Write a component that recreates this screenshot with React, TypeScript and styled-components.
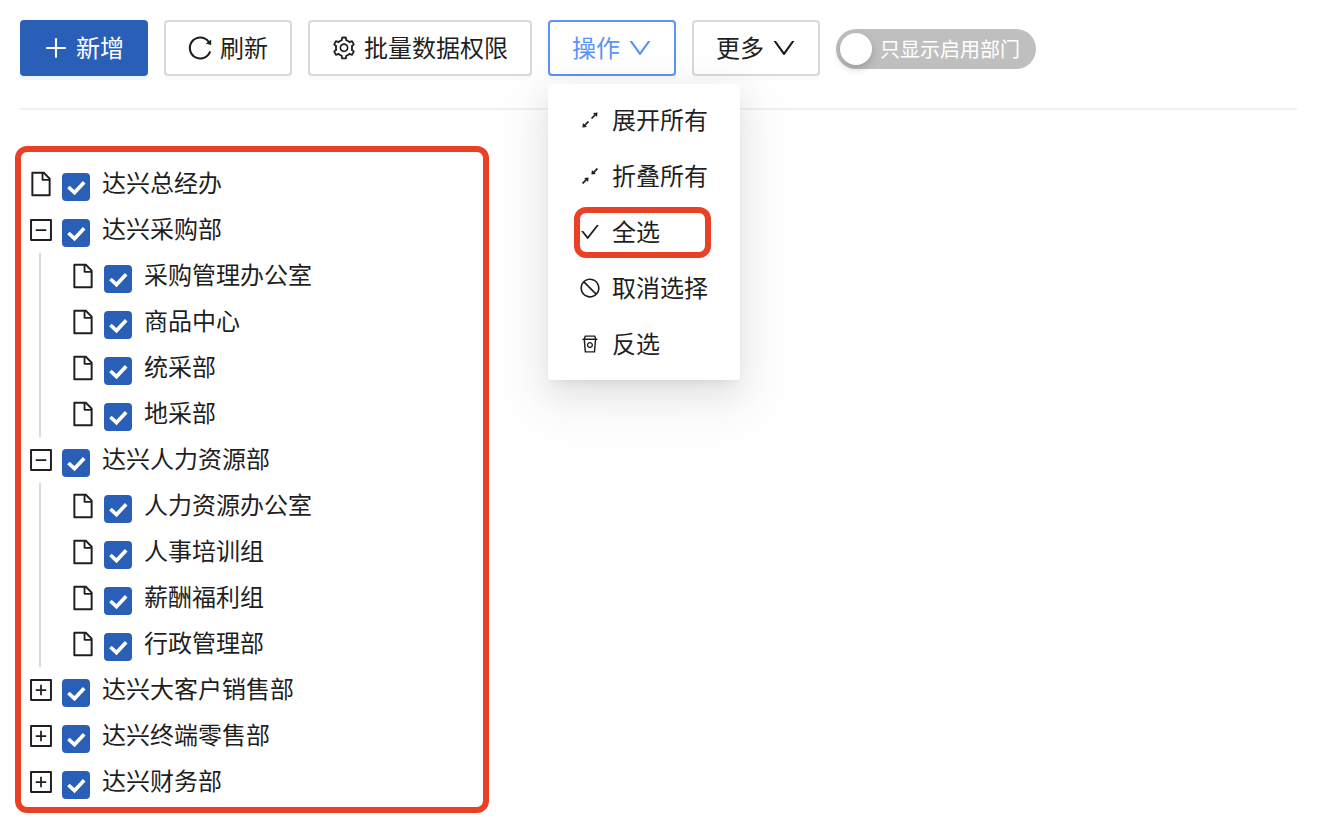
import React, { useState } from "react";
import styled, { createGlobalStyle, css } from "styled-components";
import {
  AiOutlineCheck,
  AiOutlineDown,
  AiOutlineExpandAlt,
  AiOutlineFile,
  AiOutlineMinusSquare,
  AiOutlinePlus,
  AiOutlinePlusSquare,
  AiOutlineReload,
  AiOutlineRest,
  AiOutlineSetting,
  AiOutlineShrink,
  AiOutlineStop,
} from "react-icons/ai";

const color = {
  primary: "#2a5fb8",
  active: "#5a94f8",
  text: "#1f1f1f",
  border: "#d9d9d9",
  divider: "#f0f0f0",
  highlight: "#ea4026",
  off: "#bfbfbf",
};

const GlobalStyle = createGlobalStyle`
  *, *::before, *::after { box-sizing: border-box; }
  body {
    margin: 0;
    background: #fff;
    color: ${color.text};
    font-family: "Noto Sans CJK SC", "Noto Sans", sans-serif;
    font-size: 24px;
    line-height: 36px;
  }
  button { font: inherit; color: inherit; cursor: pointer; }
  ul { list-style: none; margin: 0; padding: 0; }
  svg { display: block; flex: none; }
`;

const Page = styled.div`
  padding: 20px 23px 15px 15px;
`;

const Toolbar = styled.header`
  display: flex;
  flex-wrap: wrap;
  align-items: center;
  gap: 16px;
  margin-left: 5px;
  padding-bottom: 32px;
  border-bottom: 2px solid ${color.divider};
`;

const Caption = styled.span`
  padding-bottom: 2px;
`;

const IconSlot = styled.span`
  display: flex;
  align-items: center;
  justify-content: center;
  width: 24px;
`;

const Button = styled.button<{ $variant?: "primary" | "active" }>`
  display: flex;
  align-items: center;
  gap: 8px;
  height: 56px;
  padding: 0 22px;
  border: 2px solid ${color.border};
  border-radius: 4px;
  background: #fff;
  box-shadow: 0 4px 0 rgba(0, 0, 0, 0.016);
  white-space: nowrap;

  ${({ $variant }) =>
    $variant === "primary" &&
    css`
      background: ${color.primary};
      border-color: ${color.primary};
      color: #fff;
      box-shadow: 0 4px 0 #eef5ff;
    `}
  ${({ $variant }) =>
    $variant === "active" &&
    css`
      border-color: ${color.active};
      color: ${color.active};
    `}
`;

const Dropdown = styled.div`
  position: relative;
`;

const Menu = styled.ul`
  position: absolute;
  top: 64px;
  left: 0;
  z-index: 1;
  padding: 8px 0;
  border-radius: 4px;
  background: #fff;
  box-shadow:
    0 6px 12px -8px rgba(0, 0, 0, 0.12),
    0 12px 32px 0 rgba(0, 0, 0, 0.08),
    0 18px 56px 16px rgba(0, 0, 0, 0.05);
`;

const MenuItem = styled.li<{ $highlighted?: boolean }>`
  position: relative;

  ${({ $highlighted }) =>
    $highlighted &&
    css`
      &::after {
        content: "";
        position: absolute;
        inset: 3px 29px 2px 26px;
        border: 6px solid ${color.highlight};
        border-radius: 12px;
        pointer-events: none;
      }
    `}
`;

const MenuButton = styled.button`
  display: flex;
  align-items: center;
  gap: 11px;
  width: 100%;
  height: 56px;
  padding: 0 32px 0 31px;
  border: 0;
  background: none;
  white-space: nowrap;
`;

const Switch = styled.label`
  display: flex;
  align-items: center;
  gap: 8px;
  height: 40px;
  margin-top: 2px;
  padding: 0 16px 0 4px;
  border-radius: 20px;
  background: ${color.off};
  color: #fff;
  font-size: 20px;
  white-space: nowrap;
  cursor: pointer;

  &:has(input:checked) {
    flex-direction: row-reverse;
    padding: 0 4px 0 16px;
    background: ${color.primary};
  }
`;

const SwitchKnob = styled.input`
  appearance: none;
  width: 32px;
  height: 32px;
  margin: 0;
  border-radius: 50%;
  background: #fff;
  box-shadow: 0 4px 8px rgba(0, 35, 11, 0.2);
`;

const TreePanel = styled.main`
  max-width: 474px;
  margin-top: 36px;
  padding: 9px 0 2px;
  border: 6px solid ${color.highlight};
  border-radius: 12px;
`;

const Branch = styled.ul`
  margin-left: 18px;
  padding-left: 22px;
  border-left: 2px solid ${color.border};
`;

const Row = styled.div`
  display: flex;
  align-items: center;
  gap: 7px;
  height: 46px;
  padding-left: 6px;
`;

const Toggle = styled.button`
  padding: 0;
  border: 0;
  background: none;
`;

const NodeLabel = styled.label`
  display: flex;
  align-items: center;
  gap: 12px;
  white-space: nowrap;
  cursor: pointer;
`;

const NodeName = styled.span`
  padding-bottom: 4px;
`;

const CheckFrame = styled.span`
  display: grid;
  margin-top: 6px;

  > * {
    grid-area: 1 / 1;
  }
  > svg {
    pointer-events: none;
  }
`;

const CheckInput = styled.input`
  appearance: none;
  width: 28px;
  height: 28px;
  margin: 0;
  border: 2px solid ${color.border};
  border-radius: 4px;
  background: #fff;

  &:checked {
    border-color: ${color.primary};
    background: ${color.primary};
  }
`;

type Department = { name: string; children?: string[]; closed?: boolean };

const departments: Department[] = [
  { name: "达兴总经办" },
  { name: "达兴采购部", children: ["采购管理办公室", "商品中心", "统采部", "地采部"] },
  {
    name: "达兴人力资源部",
    children: ["人力资源办公室", "人事培训组", "薪酬福利组", "行政管理部"],
  },
  { name: "达兴大客户销售部", children: [], closed: true },
  { name: "达兴终端零售部", children: [], closed: true },
  { name: "达兴财务部", children: [], closed: true },
];

const allNames = departments.flatMap((d) => [d.name, ...(d.children ?? [])]);
const parents = departments.filter((d) => d.children).map((d) => d.name);

function NodeCheck({
  name,
  checked,
  onChange,
}: {
  name: string;
  checked: boolean;
  onChange: () => void;
}) {
  return (
    <NodeLabel>
      <CheckFrame>
        <CheckInput type="checkbox" checked={checked} onChange={onChange} />
        <svg width="28" height="28" viewBox="0 0 28 28" aria-hidden="true">
          <path d="M6.4 14L12.5 19.6L22.2 9.2" fill="none" stroke="#fff" strokeWidth="3.6" />
        </svg>
      </CheckFrame>
      <NodeName>{name}</NodeName>
    </NodeLabel>
  );
}

export default function App() {
  const [checked, setChecked] = useState<string[]>(allNames);
  const [open, setOpen] = useState<string[]>(
    departments.filter((d) => d.children && !d.closed).map((d) => d.name),
  );
  const [menuOpen, setMenuOpen] = useState(true);

  const flip = (list: string[], name: string) =>
    list.includes(name) ? list.filter((n) => n !== name) : [...list, name];
  const toggleCheck = (name: string) => setChecked((list) => flip(list, name));

  const actions = [
    { label: "展开所有", Icon: AiOutlineExpandAlt, run: () => setOpen(parents) },
    { label: "折叠所有", Icon: AiOutlineShrink, run: () => setOpen([]) },
    { label: "全选", Icon: AiOutlineCheck, run: () => setChecked(allNames), highlighted: true },
    { label: "取消选择", Icon: AiOutlineStop, run: () => setChecked([]) },
    {
      label: "反选",
      Icon: AiOutlineRest,
      run: () => setChecked((list) => allNames.filter((n) => !list.includes(n))),
    },
  ];

  return (
    <>
      <GlobalStyle />
      <Page>
        <Toolbar>
          <Button type="button" $variant="primary">
            <IconSlot>
              <AiOutlinePlus size={28} />
            </IconSlot>
            <Caption>新增</Caption>
          </Button>
          <Button type="button">
            <IconSlot>
              <AiOutlineReload size={28} />
            </IconSlot>
            <Caption>刷新</Caption>
          </Button>
          <Button type="button">
            <IconSlot>
              <AiOutlineSetting size={26} />
            </IconSlot>
            <Caption>批量数据权限</Caption>
          </Button>
          <Dropdown>
            <Button
              type="button"
              $variant="active"
              aria-expanded={menuOpen}
              onClick={() => setMenuOpen(!menuOpen)}
            >
              <Caption>操作</Caption>
              <IconSlot>
                <AiOutlineDown size={28} />
              </IconSlot>
            </Button>
            {menuOpen && (
              <Menu>
                {actions.map(({ label, Icon, run, highlighted }) => (
                  <MenuItem key={label} $highlighted={highlighted}>
                    <MenuButton type="button" onClick={run}>
                      <Icon size={22} />
                      <Caption>{label}</Caption>
                    </MenuButton>
                  </MenuItem>
                ))}
              </Menu>
            )}
          </Dropdown>
          <Button type="button">
            <Caption>更多</Caption>
            <IconSlot>
              <AiOutlineDown size={28} />
            </IconSlot>
          </Button>
          <Switch>
            <SwitchKnob type="checkbox" role="switch" />
            只显示启用部门
          </Switch>
        </Toolbar>

        <TreePanel>
          <ul>
            {departments.map(({ name, children }) => {
              const expanded = open.includes(name);
              return (
                <li key={name}>
                  <Row>
                    {children ? (
                      <Toggle
                        type="button"
                        aria-label={name}
                        aria-expanded={expanded}
                        onClick={() => setOpen((list) => flip(list, name))}
                      >
                        {expanded ? (
                          <AiOutlineMinusSquare size={28} />
                        ) : (
                          <AiOutlinePlusSquare size={28} />
                        )}
                      </Toggle>
                    ) : (
                      <AiOutlineFile size={28} />
                    )}
                    <NodeCheck
                      name={name}
                      checked={checked.includes(name)}
                      onChange={() => toggleCheck(name)}
                    />
                  </Row>
                  {expanded && children && children.length > 0 && (
                    <Branch>
                      {children.map((child) => (
                        <li key={child}>
                          <Row>
                            <AiOutlineFile size={28} />
                            <NodeCheck
                              name={child}
                              checked={checked.includes(child)}
                              onChange={() => toggleCheck(child)}
                            />
                          </Row>
                        </li>
                      ))}
                    </Branch>
                  )}
                </li>
              );
            })}
          </ul>
        </TreePanel>
      </Page>
    </>
  );
}
